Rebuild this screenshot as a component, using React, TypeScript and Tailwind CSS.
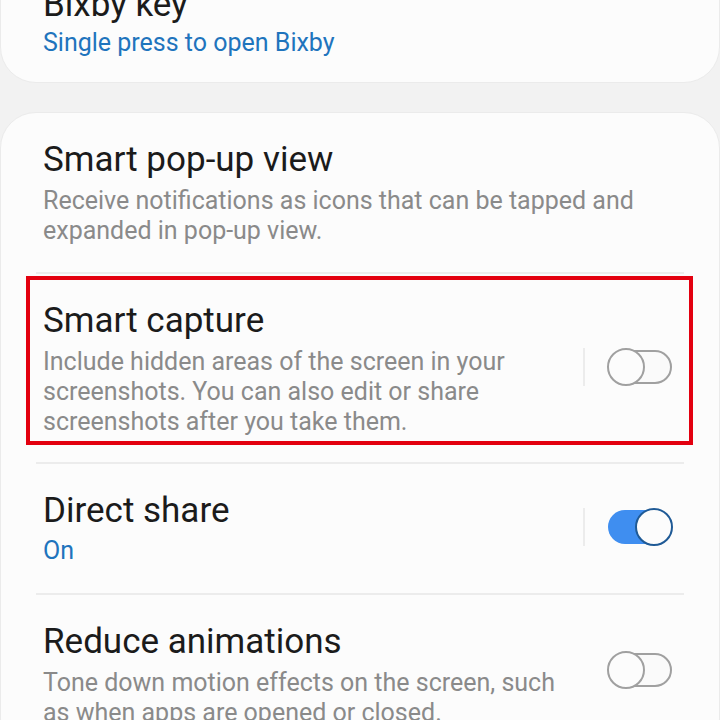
import React, { useState } from 'react';

interface ToggleProps {
  on: boolean;
  onChange: () => void;
}

const Toggle: React.FC<ToggleProps> = ({ on, onChange }) => (
  <button onClick={onChange} className="relative w-[66px] h-[38px] shrink-0">
    <span
      className={`absolute left-[1px] right-[1px] top-[2px] bottom-[2px] rounded-full ${
        on ? 'bg-[#3f8ef0]' : 'border-2 border-[#a0a0a0] bg-[#fafafa]'
      }`}
    />
    <span
      className={`absolute top-0 w-[38px] h-[38px] rounded-full bg-[#fcfcfc] border-2 ${
        on ? 'right-0 border-[#1f5a96]' : 'left-0 border-[#a0a0a0]'
      }`}
    />
  </button>
);

const Divider = () => <div className="mx-[35px] h-[2px] bg-[#ececec]" />;

export default function App() {
  const [capture, setCapture] = useState(false);
  const [share, setShare] = useState(true);
  const [reduce, setReduce] = useState(false);

  return (
    <div
      className="w-[720px] h-[720px] overflow-hidden bg-[#f2f2f2]"
      style={{ fontFamily: 'Roboto, "Noto Sans", sans-serif' }}
    >
      {/* Bixby key card, scrolled partly out of view */}
      <div className="mt-[-40px] rounded-[36px] bg-[#fcfcfc] border border-[#ebebeb] pl-[42px] pr-[46px] pt-[26px] pb-[24px]">
        <div className="text-[35px] leading-[36px] text-[#1b1b1b]">Bixby key</div>
        <div className="mt-[5px] text-[25px] leading-[30px] text-[#1f74bd]">Single press to open Bixby</div>
      </div>

      <div className="relative mt-[29px] rounded-[36px] bg-[#fcfcfc] border border-[#ebebeb]">
        {/* Smart pop-up view */}
        <div className="pl-[42px] pr-[46px] pt-[29px] pb-[26px]">
          <div className="text-[35px] leading-[36px] text-[#1b1b1b]">Smart pop-up view</div>
          <div className="mt-[8px] text-[25px] leading-[30px] text-[#8a8a8a]">
            Receive notifications as icons that can be tapped and
            <br />
            expanded in pop-up view.
          </div>
        </div>
        <Divider />

        {/* Smart capture */}
        <div className="flex items-center pl-[42px] pr-[46px] pt-[29px] pb-[25px]">
          <div className="flex-1">
            <div className="text-[35px] leading-[36px] text-[#1b1b1b]">Smart capture</div>
            <div className="mt-[8px] text-[25px] leading-[30px] text-[#8a8a8a]">
              Include hidden areas of the screen in your
              <br />
              screenshots. You can also edit or share
              <br />
              screenshots after you take them.
            </div>
          </div>
          <div className="flex items-center gap-[22px] mt-[-6px]">
            <div className="w-[2px] h-[38px] bg-[#ececec]" />
            <Toggle on={capture} onChange={() => setCapture(!capture)} />
          </div>
        </div>
        <Divider />

        {/* Direct share */}
        <div className="flex items-center pl-[42px] pr-[46px] pt-[29px] pb-[27px]">
          <div className="flex-1">
            <div className="text-[35px] leading-[36px] text-[#1b1b1b]">Direct share</div>
            <div className="mt-[7px] text-[25px] leading-[30px] text-[#1f74bd]">{share ? 'On' : 'Off'}</div>
          </div>
          <div className="flex items-center gap-[22px] mt-[-6px]">
            <div className="w-[2px] h-[38px] bg-[#ececec]" />
            <Toggle on={share} onChange={() => setShare(!share)} />
          </div>
        </div>
        <Divider />

        {/* Reduce animations */}
        <div className="flex items-center pl-[42px] pr-[46px] pt-[29px] pb-[26px]">
          <div className="flex-1">
            <div className="text-[35px] leading-[36px] text-[#1b1b1b]">Reduce animations</div>
            <div className="mt-[8px] text-[25px] leading-[30px] text-[#8a8a8a]">
              Tone down motion effects on the screen, such
              <br />
              as when apps are opened or closed.
            </div>
          </div>
          <div className="mt-[-6px]">
            <Toggle on={reduce} onChange={() => setReduce(!reduce)} />
          </div>
        </div>

        {/* highlight annotation */}
        <div className="pointer-events-none absolute left-[25px] top-[163px] w-[667px] h-[169px] border-[4px] border-[#e3000f]" />
      </div>
    </div>
  );
}
